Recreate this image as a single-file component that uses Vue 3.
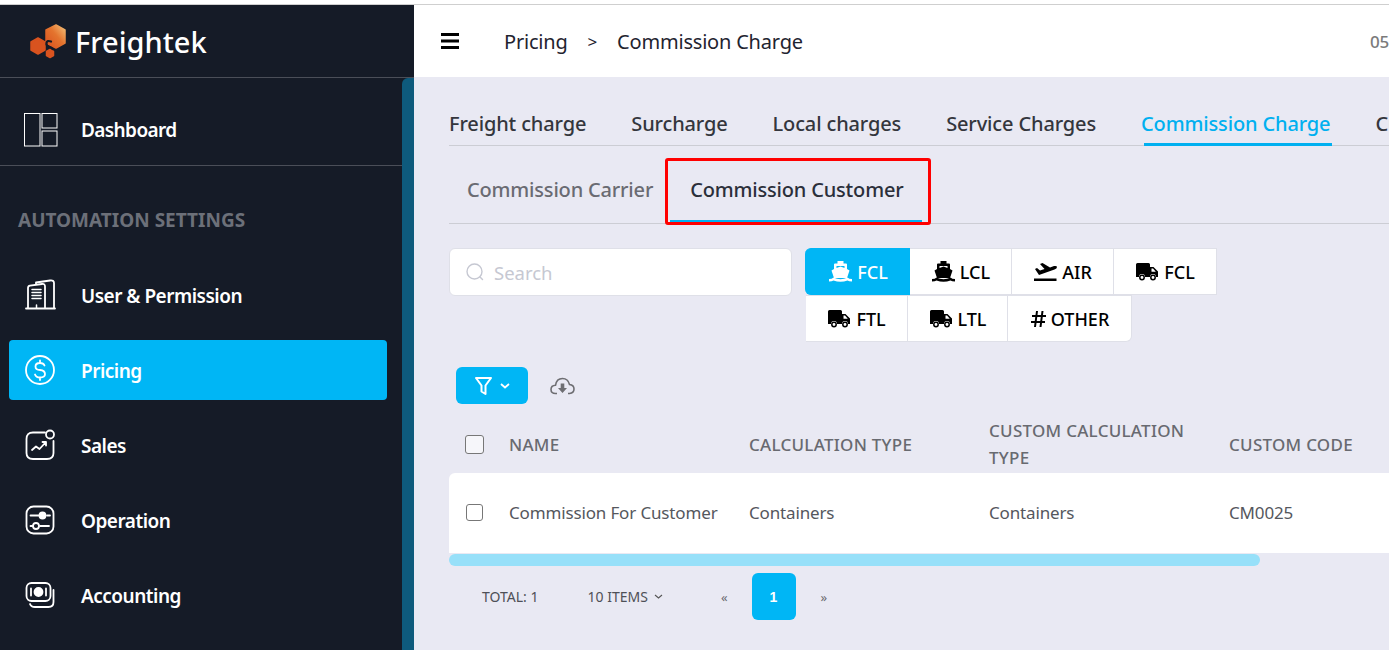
<script setup>
const navItems = [
  { label: 'User & Permission', icon: 'user' },
  { label: 'Pricing', icon: 'pricing', active: true },
  { label: 'Sales', icon: 'sales' },
  { label: 'Operation', icon: 'operation' },
  { label: 'Accounting', icon: 'accounting' }
]
const tabs = ['Freight charge', 'Surcharge', 'Local charges', 'Service Charges', 'Commission Charge', 'Customs']
const row1 = [
  { label: 'FCL', icon: 'ship', w: 105, active: true },
  { label: 'LCL', icon: 'ship', w: 102 },
  { label: 'AIR', icon: 'plane', w: 102 },
  { label: 'FCL', icon: 'truck', w: 103 }
]
const row2 = [
  { label: 'FTL', icon: 'truck', w: 102 },
  { label: 'LTL', icon: 'truck', w: 100 },
  { label: 'OTHER', icon: 'hash', w: 124 }
]
</script>

<template>
  <div class="page">
    <aside class="sidebar">
      <div class="brand">
        <svg class="logo" width="38" height="36" viewBox="0 0 38 36">
          <defs>
            <linearGradient id="lg" x1="0" y1="1" x2="1" y2="0">
              <stop offset="0" stop-color="#d9501e" />
              <stop offset="0.55" stop-color="#e4742e" />
              <stop offset="1" stop-color="#f3c27a" />
            </linearGradient>
          </defs>
          <path d="M27 1 36 6v13l-9 5-10-5V6z" fill="url(#lg)" stroke="url(#lg)" stroke-width="1.500" stroke-linejoin="round" />
          <path d="M9 14l7 4v8l-7 4-7-4v-8z" fill="#d9531f" stroke="#d9531f" stroke-width="1.500" stroke-linejoin="round" />
          <path d="M21 25.500l3.500 2v4l-3.500 2-3.500-2v-4z" fill="#d9531f" stroke="#d9531f" stroke-width="1.500" stroke-linejoin="round" />
          <path d="M22 17.500q-4-1.500-4.500 1.500t3 4q2.500.5 3 2" fill="none" stroke="#151b27" stroke-width="2.200" stroke-linecap="round" />
        </svg>
        <span class="brand-name">Freightek</span>
      </div>
      <div class="sidebar-body">
        <div class="nav-scroll">
          <div class="dash">
            <svg width="34" height="34" viewBox="0 0 34 34" fill="none" stroke="#fff" stroke-width="1">
              <rect x="0.500" y="0.500" width="15.500" height="32.500" />
              <rect x="18" y="0.500" width="15" height="14.500" />
              <rect x="18" y="18" width="15" height="15" />
            </svg>
            <span>Dashboard</span>
          </div>
          <div class="section">AUTOMATION SETTINGS</div>
          <nav class="nav">
            <div v-for="item in navItems" :key="item.label" class="nav-item" :class="{ active: item.active }">
              <svg class="nav-icon" width="32" height="32" viewBox="0 0 32 32" fill="none" stroke="#fff" stroke-width="1.800" stroke-linecap="round" stroke-linejoin="round">
                <template v-if="item.icon === 'user'">
                  <path d="M2 29.500h29M4 29V9q0-2 2-2.300L18 5q3-.4 3 2.500V29" />
                  <path d="M12 5V3.500L26 1.500q4-.5 4 2.500V29" />
                  <path d="M8 10.500h9M8 13.500h9M8 16.500h9M8 19.500h9M12.500 26v3" stroke-width="1.500" />
                </template>
                <template v-else-if="item.icon === 'pricing'">
                  <circle cx="16" cy="16" r="14" />
                  <path d="M20.500 11.500Q19.500 9 16 9q-4.500 0-4.500 3.500T16 16q5 .5 5 4t-5 3.500q-4 0-5-3M16 6.500V9M16 23.500V26" />
                </template>
                <template v-else-if="item.icon === 'sales'">
                  <path d="M21 3.500H9Q2.500 3.500 2.500 10v14Q2.500 30 9 30h14q6.500 0 6.500-6V12" />
                  <circle cx="26" cy="5.500" r="4" />
                  <path d="M8 21l4-3.500 3.500 2.500 6-6.500M18.500 13h3.500v3.500" />
                </template>
                <template v-else-if="item.icon === 'operation'">
                  <rect x="2.500" y="2.500" width="27" height="27" rx="7" />
                  <path d="M6.500 11.500h9M23 11.500h3M6.500 22h2M16 22h9" />
                  <circle cx="18.500" cy="11.500" r="3" fill="#fff" />
                  <circle cx="12" cy="22" r="3" />
                </template>
                <template v-else>
                  <rect x="2.500" y="4" width="24" height="18" rx="5" />
                  <path d="M29.500 11v12q0 5-5 5H11q-4 0-5-3" />
                  <circle cx="14.500" cy="13" r="4" fill="#fff" />
                  <path d="M7 9.500v7M22 9.500v7" />
                </template>
              </svg>
              <span class="nav-label">{{ item.label }}</span>
            </div>
          </nav>
        </div>
        <div class="side-scroll"></div>
      </div>
    </aside>

    <main class="main">
      <header class="topbar">
        <svg class="burger" width="18" height="16" viewBox="0 0 18 16" fill="#000">
          <rect y="0" width="18" height="3" />
          <rect y="6.500" width="18" height="3" />
          <rect y="13" width="18" height="3" />
        </svg>
        <span class="crumb first">Pricing</span>
        <span class="crumb sep">&gt;</span>
        <span class="crumb">Commission Charge</span>
        <span class="date">05</span>
      </header>

      <section class="content">
        <div class="tabs">
          <div v-for="tab in tabs" :key="tab" class="tab" :class="{ on: tab === 'Commission Charge' }">{{ tab }}</div>
        </div>

        <div class="subtabs">
          <div class="subtab">Commission Carrier</div>
          <div class="subtab current">Commission Customer</div>
          <div class="marker"></div>
        </div>

        <div class="filters">
          <div class="search">
            <svg width="18" height="18" viewBox="0 0 18 18" fill="none" stroke="#c6c8d2" stroke-width="1.400" stroke-linecap="round">
              <circle cx="8.500" cy="8.500" r="7.500" />
              <path d="M14 14l2.500 2.500" />
            </svg>
            <span>Search</span>
          </div>
          <div class="modes">
            <div v-for="(row, i) in [row1, row2]" :key="i" class="mode-row" :class="'r' + i">
              <div v-for="(m, j) in row" :key="j" class="mode" :class="{ active: m.active }" :style="{ width: m.w + 'px' }">
                <svg v-if="m.icon === 'ship'" width="23" height="21" viewBox="0 0 23 21" fill="currentColor">
                  <path d="M8.500 0h6v2.500h2.500q1 0 1 1V8l2.500 1.500L18 17H5L2.500 9.500 5 8V3.500q0-1 1-1h2.500zM7.500 5v2l4-1.500 4 1.500V5z" fill-rule="evenodd" />
                  <path d="M0 18q3 0 4.500-1.500 7 3.500 14 0Q20 18 23 18v2.500q-3 0-4.500-1-7 2.500-14 0-1.500 1-4.500 1z" />
                </svg>
                <svg v-else-if="m.icon === 'plane'" width="23" height="20" viewBox="0 0 23 20" fill="currentColor">
                  <path d="M0 16.500h22.500V19H0zM1 7l2-1 3 2.500 4.500-1.500L6 2l2.500-1 7.500 4.500 4-1.500q3-.5 3 1t-2.500 2.500L5 13z" />
                </svg>
                <svg v-else-if="m.icon === 'truck'" width="23" height="18" viewBox="0 0 23 18" fill="currentColor">
                  <path d="M1.500 0h11a1.500 1.500 0 0 1 1.500 1.500V4h3.500L22 8.500V14h-2a3 3 0 0 0-6 0H9a3 3 0 0 0-6 0H0V1.500A1.500 1.500 0 0 1 1.500 0z" />
                  <circle cx="6" cy="14.500" r="2.200" fill="#fff" stroke="currentColor" stroke-width="1.500" />
                  <circle cx="17" cy="14.500" r="2.200" fill="#fff" stroke="currentColor" stroke-width="1.500" />
                  <path d="M15.500 5.500h1.500l2.800 3.300h-4.300z" fill="#fff" />
                </svg>
                <svg v-else width="15" height="18" viewBox="0 0 15 18" fill="none" stroke="currentColor" stroke-width="2">
                  <path d="M1 6h14M0 12h14M6 1 4 17M11.500 1l-2 16" />
                </svg>
                <span>{{ m.label }}</span>
              </div>
            </div>
          </div>
        </div>

        <div class="actions">
          <div class="filter-btn">
            <svg width="17" height="18" viewBox="0 0 17 18" fill="none" stroke="#fff" stroke-width="2" stroke-linejoin="round">
              <path d="M1 1h15l-5.500 7.500V17l-4-2.500v-6z" />
            </svg>
            <svg width="10" height="6" viewBox="0 0 10 6" fill="none" stroke="#fff" stroke-width="1.800">
              <path d="M1 1l4 3.500L9 1" />
            </svg>
          </div>
          <svg class="cloud" width="25" height="18" viewBox="0 0 25 18" fill="none" stroke="#6e6e72" stroke-width="1.600" stroke-linejoin="round">
            <path d="M7 16.500H5.500Q1 16.500 1 12.500q0-4 4.500-4.200Q6.500 1.500 12.500 1.500q5.500 0 7 6 4.500.5 4.500 4.500t-4.500 4.500H18" />
            <path d="M10.700 6.500h3.600v4.500H17l-4.500 5-4.500-5h2.700z" fill="#6e6e72" stroke="none" />
          </svg>
        </div>

        <div class="table">
          <div class="grid head">
            <div class="check-cell"><span class="box big"></span></div>
            <div>NAME</div>
            <div>CALCULATION TYPE</div>
            <div class="wrap">CUSTOM CALCULATION TYPE</div>
            <div class="nowrap">CUSTOM CODE</div>
          </div>
          <div class="grid body">
            <div class="check-cell small"><span class="box"></span></div>
            <div class="nowrap">Commission For Customer</div>
            <div>Containers</div>
            <div>Containers</div>
            <div>CM0025</div>
          </div>
          <div class="hscroll"><div class="thumb"></div></div>
        </div>

        <div class="pager">
          <span class="total">TOTAL: 1</span>
          <span class="items">10 ITEMS
            <svg width="9" height="6" viewBox="0 0 9 6" fill="none" stroke="#555" stroke-width="1.100"><path d="M1 1l3.500 3L8 1" /></svg>
          </span>
          <span class="arrow prev">«</span>
          <span class="page-no">1</span>
          <span class="arrow">»</span>
        </div>
      </section>
    </main>
  </div>
</template>

<style>
html, body { margin: 0; overflow: hidden; background: #fff; }
</style>

<style scoped>
.page {
  width: 1389px;
  height: 650px;
  display: flex;
  overflow: hidden;
  padding-top: 4px;
  box-sizing: border-box;
  position: relative;
  font-family: "Noto Sans", "Open Sans", sans-serif;
  color: #333;
}
.page::before {
  content: "";
  position: absolute;
  left: 0;
  right: 0;
  top: 4px;
  height: 1px;
  background: #cfcfcf;
  z-index: 3;
}
.sidebar {
  width: 414px;
  flex: none;
  background: #151b27;
  color: #fff;
  display: flex;
  flex-direction: column;
}
.brand {
  height: 74px;
  box-sizing: border-box;
  padding: 2px 0 0 29px;
  display: flex;
  align-items: center;
  gap: 8px;
  border-bottom: 1px solid #4a4e58;
}
.brand-name { font-size: 29px; font-weight: 500; }
.sidebar-body { flex: 1; display: flex; min-height: 0; }
.nav-scroll { flex: 1; min-width: 0; }
.side-scroll {
  width: 12px;
  background: #0e5a7c;
  border-radius: 6px 0 0 0;
}
.dash {
  height: 88px;
  box-sizing: border-box;
  display: flex;
  align-items: center;
  padding: 17px 0 0 24px;
  gap: 23px;
  border-bottom: 1px solid #4a4e58;
  font-size: 19px;
  font-weight: 600;
  letter-spacing: -0.6px;
}
.section {
  margin: 42px 0 0 18px;
  height: 25px;
  line-height: 25px;
  font-size: 19px;
  font-weight: 700;
  color: #6c7079;
}
.nav {
  margin: 32px 15px 0 9px;
  display: flex;
  flex-direction: column;
  gap: 15px;
}
.nav-item {
  height: 60px;
  display: flex;
  align-items: center;
  padding-left: 15px;
  gap: 25px;
  border-radius: 4px;
  font-size: 19px;
  font-weight: 600;
  letter-spacing: -0.5px;
}
.nav-label { padding-top: 2px; }
.nav-item.active { background: #00b6f5; }
.nav-icon { flex: none; }

.main { flex: 1; min-width: 0; display: flex; flex-direction: column; background: #e9e9f3; }
.topbar {
  height: 73px;
  flex: none;
  background: #fff;
  display: flex;
  align-items: center;
  padding: 2px 0 0 27px;
  box-sizing: border-box;
  font-size: 20px;
  letter-spacing: -0.2px;
  color: #1f2430;
}
.burger { margin-right: 45px; margin-top: -2px; }
.crumb { white-space: nowrap; }
.crumb.sep { margin: 0 20px; font-size: 17px; }
.date { margin-left: auto; font-size: 17px; color: #7b7b7b; font-weight: 500; width: 19px; overflow: hidden; }

.content { flex: 1; min-height: 0; padding-left: 35px; overflow: hidden; }
.tabs {
  height: 69px;
  box-sizing: border-box;
  display: flex;
  align-items: flex-end;
  gap: 45px;
  border-bottom: 1px solid #cccdd4;
  white-space: nowrap;
  width: 940px;
  font-size: 20px;
  letter-spacing: -0.14px;
  color: #34363d;
  font-weight: 500;
}
.tab { padding: 0 0 2px; height: 33px; line-height: 27px; position: relative; }
.tab.on { color: #00b0f0; }
.tab.on::after {
  content: "";
  position: absolute;
  left: 3px;
  right: -2px;
  bottom: -1px;
  height: 3px;
  background: #00b0f0;
}
.subtabs {
  position: relative;
  height: 78px;
  box-sizing: border-box;
  display: flex;
  align-items: center;
  border-bottom: 1px solid #cccdd4;
  width: 940px;
  padding: 10px 0 0 18px;
  font-size: 20px;
  font-weight: 500;
  letter-spacing: -0.18px;
  color: #6a6b72;
}
.subtab { white-space: nowrap; position: relative; line-height: 27px; }
.subtab.current { margin-left: 37px; color: #2b2f3a; }
.subtab.current::after {
  content: "";
  position: absolute;
  left: -20px;
  width: 252px;
  top: 44px;
  height: 2px;
  background: #00b0f0;
}
.marker {
  position: absolute;
  left: 216px;
  top: 12px;
  width: 266px;
  height: 67px;
  box-sizing: border-box;
  border: 3px solid #ff0000;
  border-radius: 3px;
}
.filters { display: flex; margin-top: 24px; gap: 13px; align-items: flex-start; }
.search {
  width: 343px;
  height: 48px;
  box-sizing: border-box;
  background: #fff;
  border: 1px solid #dfe0e8;
  border-radius: 6px;
  display: flex;
  align-items: center;
  padding: 0 0 0 16px;
  gap: 10px;
  color: #c6c8d2;
  font-size: 18.500px;
}
.modes { display: flex; flex-direction: column; }
.mode-row { display: flex; height: 47px; }
.mode-row.r1 { margin-left: 1px; }
.mode {
  box-sizing: border-box;
  height: 100%;
  background: #fff;
  border: 1px solid #dfe0e8;
  border-left: 0;
  display: flex;
  align-items: center;
  justify-content: center;
  gap: 5px;
  padding-left: 1px;
  font-size: 18px;
  font-weight: 500;
  color: #000;
}
.mode.active { background: #00b6f5; color: #fff; border-color: #00b6f5; border-radius: 6px 0 0 6px; padding-left: 3px; }
.r1 .mode:last-child { border-radius: 0 0 6px 0; }
.mode svg { flex: none; }
.actions { display: flex; align-items: center; margin: 25px 0 0 7px; gap: 22px; height: 37px; }
.filter-btn {
  width: 72px;
  height: 37px;
  background: #00b6f5;
  border-radius: 6px;
  display: flex;
  align-items: center;
  justify-content: center;
  gap: 8px;
}
.table { margin-top: 12px; width: 1000px; }
.grid {
  display: grid;
  grid-template-columns: 60px 240px 240px 240px 220px;
  align-items: center;
}
.head {
  height: 57px;
  font-size: 17px;
  line-height: 27px;
  letter-spacing: 0.27px;
  font-weight: 500;
  color: #686a70;
}
.wrap { padding: 0 30px 2px 0; }
.body {
  height: 81px;
  padding-bottom: 2px;
  background: #fff;
  border-radius: 6px 0 0 0;
  font-size: 17px;
  letter-spacing: -0.15px;
  color: #55575d;
  border-bottom: 1px solid #e9e9f3;
  box-sizing: border-box;
}
.nowrap { white-space: nowrap; }
.check-cell { display: flex; padding-left: 16px; }
.check-cell.small { padding-left: 17px; }
.box {
  width: 15px;
  height: 15px;
  border: 1.500px solid #777;
  border-radius: 3px;
  background: #fff;
  display: block;
}
.box.big { width: 17px; height: 17px; background: #f6f6fa; }
.hscroll { height: 12px; }
.thumb { width: 811px; height: 12px; border-radius: 6px; background: #97e0f9; }
.pager {
  display: flex;
  align-items: center;
  height: 47px;
  margin-top: 7px;
  font-size: 14px;
  color: #4e5057;
  white-space: nowrap;
}
.total { margin-left: 33px; }
.items { margin-left: 49px; display: flex; align-items: center; gap: 6px; }
.arrow { font-size: 13px; color: #6b6b70; }
.arrow.prev { margin-left: 58px; }
.page-no {
  width: 44px;
  height: 47px;
  margin: 0 25px 0 24px;
  background: #00b6f5;
  border-radius: 6px;
  color: #fff;
  display: flex;
  align-items: center;
  justify-content: center;
  font-family: "Liberation Sans", sans-serif;
  font-weight: 700;
  font-size: 14px;
}
</style>
